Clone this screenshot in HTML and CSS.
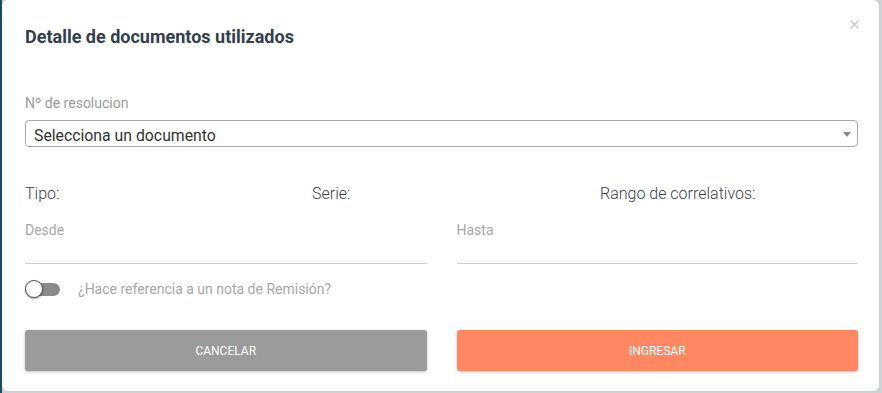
FILE: index.html
```html
<!DOCTYPE html>
<html lang="es">
<head>
<meta charset="utf-8">
<link rel="stylesheet" href="styles.css">
</head>
<body>
<div class="modal">
  <div class="header">
    <h1 class="title">Detalle de documentos utilizados</h1>
    <span class="close">&times;</span>
  </div>
  <div class="field">
    <div class="label">Nº de resolucion</div>
    <div class="select">
      <span class="select-text">Selecciona un documento</span>
      <span class="caret"></span>
    </div>
  </div>
  <div class="info">
    <div>Tipo:</div>
    <div>Serie:</div>
    <div>Rango de correlativos:</div>
  </div>
  <div class="range">
    <div class="line-field"><div class="ph">Desde</div></div>
    <div class="line-field"><div class="ph">Hasta</div></div>
  </div>
  <div class="toggle-row">
    <span class="toggle"><span class="knob"></span></span>
    <span class="toggle-label">¿Hace referencia a un nota de Remisión?</span>
  </div>
  <div class="actions">
    <button class="btn btn-cancel">CANCELAR</button>
    <button class="btn btn-ok">INGRESAR</button>
  </div>
</div>
</body>
</html>
```
FILE: styles.css
```css
html, body {
  margin: 0;
  padding: 0;
  height: 100%;
}
body {
  background: linear-gradient(to right, #1d4a5e 0 2px, #cfd2d4 2px);
  font-family: Roboto, "Liberation Sans", sans-serif;
  overflow: hidden;
}
.modal {
  margin-left: 2px;
  width: 877px;
  height: 391px;
  background: #fff;
  border-radius: 6px;
  box-sizing: border-box;
  padding: 0 21px 0 23px;
}
.header {
  display: flex;
  justify-content: space-between;
  align-items: flex-start;
  height: 95px;
}
.title {
  margin: 26px 0 0 0;
  font-size: 18px;
  font-weight: 700;
  color: #343d4e;
  letter-spacing: 0;
}
.close {
  margin-top: 13px;
  margin-right: -2px;
  font-size: 20px;
  font-weight: 300;
  color: #c2c2c2;
  line-height: 1;
}
.label {
  font-size: 14px;
  color: #9b9b9b;
  line-height: 16px;
  margin-bottom: 9px;
}
.select {
  height: 27px;
  box-sizing: border-box;
  border: 1px solid #a9a9a9;
  border-radius: 4px;
  display: flex;
  align-items: center;
  justify-content: space-between;
  padding: 0 6px 0 8px;
  font-size: 15.8px;
  font-weight: 400;
  color: #333;
}
.select-text {
  padding-top: 4px;
}
.caret {
  width: 0;
  height: 0;
  border-left: 4px solid transparent;
  border-right: 4px solid transparent;
  border-top: 5px solid #888;
  margin-top: 1px;
}
.info {
  display: grid;
  grid-template-columns: 287px 288px auto;
  margin-top: 37px;
  font-size: 16px;
  font-weight: 300;
  color: #3d4250;
  line-height: 19px;
}
.range {
  display: grid;
  grid-template-columns: 1fr 1fr;
  column-gap: 30px;
  margin-top: 19px;
}
.line-field {
  height: 41px;
  border-bottom: 1px solid #cfcfcf;
}
.ph {
  font-size: 14px;
  color: #a8a8a8;
  line-height: 16px;
}
.toggle-row {
  display: flex;
  align-items: center;
  margin-top: 15px;
  height: 20px;
}
.toggle {
  position: relative;
  width: 35px;
  height: 14px;
  display: inline-block;
}
.toggle::before {
  content: "";
  position: absolute;
  left: 7px;
  right: 0;
  top: 1px;
  height: 13px;
  background: #8a8a8a;
  border-radius: 7px;
}
.knob {
  position: absolute;
  left: 0;
  top: -2px;
  width: 16px;
  height: 16px;
  border-radius: 50%;
  background: #fff;
  border: 1px solid #555;
  box-shadow: 0 1px 2px rgba(0,0,0,0.4);
}
.toggle-label {
  margin-left: 18px;
  font-size: 14px;
  color: #a8a8a8;
}
.actions {
  display: grid;
  grid-template-columns: 1fr 1fr;
  column-gap: 30px;
  margin-top: 31px;
}
.btn {
  height: 41px;
  border: none;
  border-radius: 3px;
  color: #fff;
  font-family: Roboto, "Liberation Sans", sans-serif;
  font-size: 12px;
  box-shadow: 0 1px 3px rgba(0,0,0,0.25);
}
.btn-cancel { background: #9b9b9b; }
.btn-ok { background: #ff8862; }
```
